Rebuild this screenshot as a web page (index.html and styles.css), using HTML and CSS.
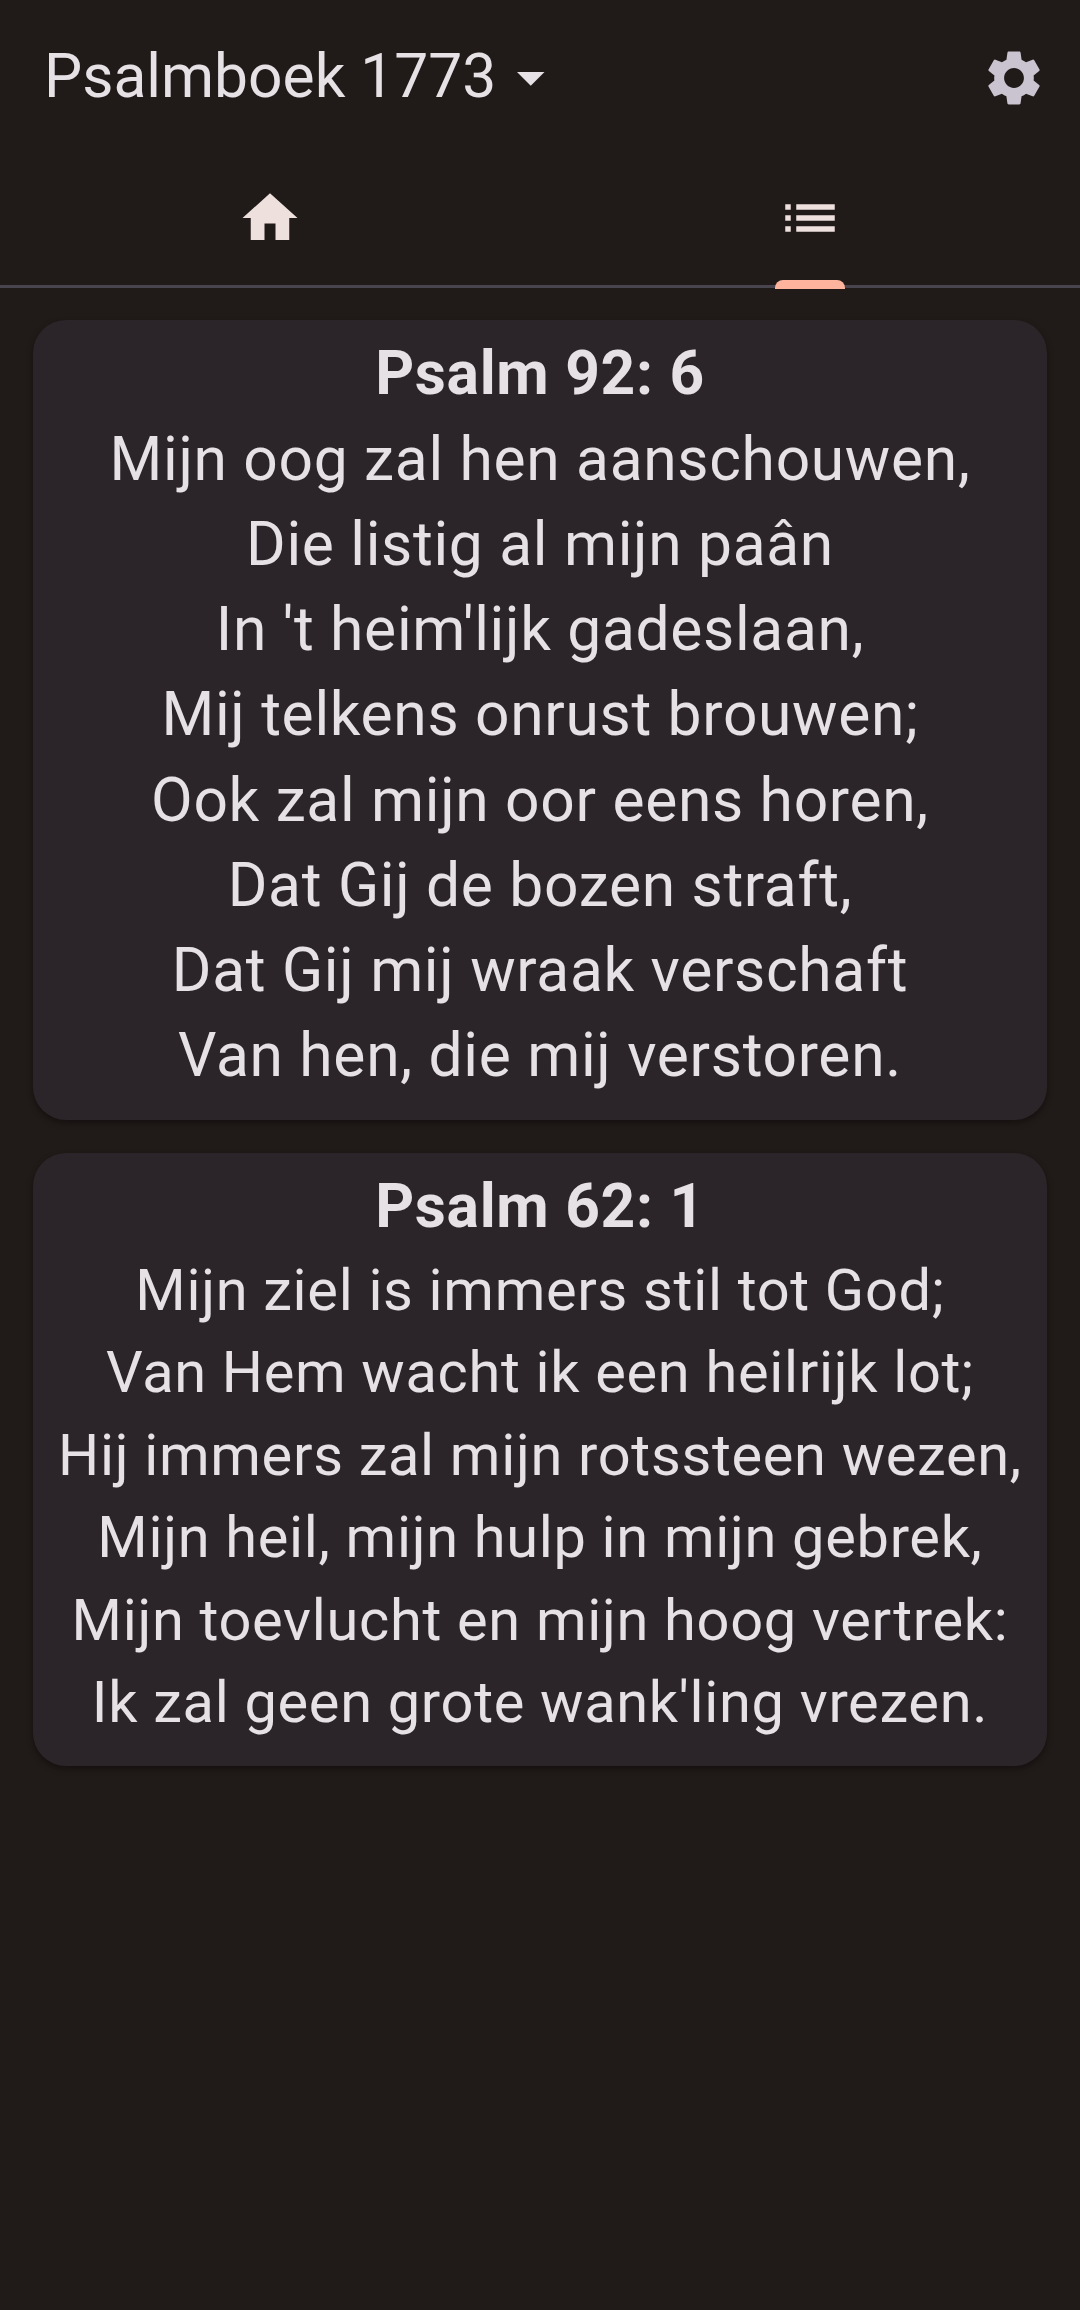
FILE: index.html
```html
<!DOCTYPE html>
<html lang="nl">
<head>
<meta charset="utf-8">
<title>Psalmboek 1773</title>
<link rel="stylesheet" href="styles.css">
</head>
<body>
<header class="bar">
  <h1 class="title">Psalmboek 1773</h1>
  <svg class="caret" viewBox="0 0 10 5"><path d="M0 0h10L5 5z"/></svg>
  <svg class="gear" viewBox="0 0 24 24"><path d="M19.14 12.94c.04-.3.06-.61.06-.94 0-.32-.02-.64-.07-.94l2.03-1.58c.18-.14.23-.41.12-.61l-1.92-3.32c-.12-.22-.37-.29-.59-.22l-2.39.96c-.5-.38-1.03-.7-1.62-.94l-.36-2.54c-.04-.24-.24-.41-.48-.41h-3.84c-.24 0-.43.17-.47.41l-.36 2.54c-.59.24-1.13.57-1.62.94l-2.39-.96c-.22-.08-.47 0-.59.22L2.74 8.87c-.12.21-.08.47.12.61l2.03 1.58c-.05.3-.09.63-.09.94s.02.64.07.94l-2.03 1.58c-.18.14-.23.41-.12.61l1.92 3.32c.12.22.37.29.59.22l2.39-.96c.5.38 1.03.7 1.62.94l.36 2.54c.05.24.24.41.48.41h3.84c.24 0 .44-.17.47-.41l.36-2.54c.59-.24 1.13-.56 1.62-.94l2.39.96c.22.08.47 0 .59-.22l1.92-3.32c.12-.22.07-.47-.12-.61l-2.01-1.58zM12 15.6c-1.98 0-3.6-1.62-3.6-3.6s1.62-3.6 3.6-3.6 3.6 1.62 3.6 3.6-1.62 3.6-3.6 3.6z"/></svg>
</header>
<nav class="tabs">
  <div class="tab"><svg class="icon" viewBox="0 0 24 24"><path d="M10 20v-6h4v6h5v-8h3L12 3 2 12h3v8z"/></svg></div>
  <div class="tab active"><svg class="icon" viewBox="0 0 24 24"><path d="M3 13h2v-2H3v2zm0 4h2v-2H3v2zm0-8h2V7H3v2zm4 4h14v-2H7v2zm0 4h14v-2H7v2zM7 7v2h14V7H7z"/></svg></div>
</nav>
<main class="list">
  <article class="card first">
    <h2>Psalm 92: 6</h2>
    <p>Mijn oog zal hen aanschouwen,</p>
    <p>Die listig al mijn paân</p>
    <p>In 't heim'lijk gadeslaan,</p>
    <p>Mij telkens onrust brouwen;</p>
    <p>Ook zal mijn oor eens horen,</p>
    <p>Dat Gij de bozen straft,</p>
    <p>Dat Gij mij wraak verschaft</p>
    <p>Van hen, die mij verstoren.</p>
  </article>
  <article class="card second">
    <h2>Psalm 62: 1</h2>
    <p>Mijn ziel is immers stil tot God;</p>
    <p>Van Hem wacht ik een heilrijk lot;</p>
    <p>Hij immers zal mijn rotssteen wezen,</p>
    <p>Mijn heil, mijn hulp in mijn gebrek,</p>
    <p>Mijn toevlucht en mijn hoog vertrek:</p>
    <p>Ik zal geen grote wank'ling vrezen.</p>
  </article>
</main>
</body>
</html>
```
FILE: styles.css
```css
* { box-sizing: border-box; }
body {
  margin: 0;
  min-height: 2310px;
  background: #201a18;
  color: #e6e1e5;
  font-family: Roboto, sans-serif;
}
h1, h2, p { margin: 0; }
.bar {
  display: flex;
  align-items: center;
  height: 154px;
  padding: 0 33px 0 44px;
}
.title { margin-bottom: 1px; font-size: 60.5px; font-weight: 400; line-height: 72px; }
.caret { width: 27.5px; height: 13.75px; margin: 4px 0 0 21px; fill: #e6e1e5; }
.gear { width: 66px; height: 66px; margin: 2px 0 0 auto; fill: #cac4d0; }
.tabs {
  display: flex;
  height: 134px;
  border-bottom: 3px solid #49454f;
}
.tab {
  position: relative;
  flex: 1;
  display: flex;
  justify-content: center;
  align-items: center;
  padding-bottom: 3px;
}
.icon { width: 66px; height: 66px; fill: #ede0dd; }
.active::after {
  content: "";
  position: absolute;
  bottom: -4px;
  left: 50%;
  width: 70px;
  height: 9px;
  margin-left: -35px;
  border-radius: 8px 8px 0 0;
  background: #ffb59d;
}
.list {
  display: flex;
  flex-direction: column;
  gap: 33px;
  padding: 32px 33px;
}
.card {
  padding-top: 11px;
  border-radius: 33px;
  background: #2b2529;
  text-align: center;
  white-space: nowrap;
  letter-spacing: 0.6875px;
  box-shadow: 0 3px 6px rgba(0, 0, 0, 0.35);
}
.card h2 { font-size: 60.5px; line-height: 85px; font-weight: 700; }
.first { height: 800px; }
.first h2 { margin-bottom: 1px; }
.first p { font-size: 60.5px; line-height: 85.14px; }
.second { height: 613px; }
.second p { font-size: 57.75px; line-height: 82.4px; }
```
